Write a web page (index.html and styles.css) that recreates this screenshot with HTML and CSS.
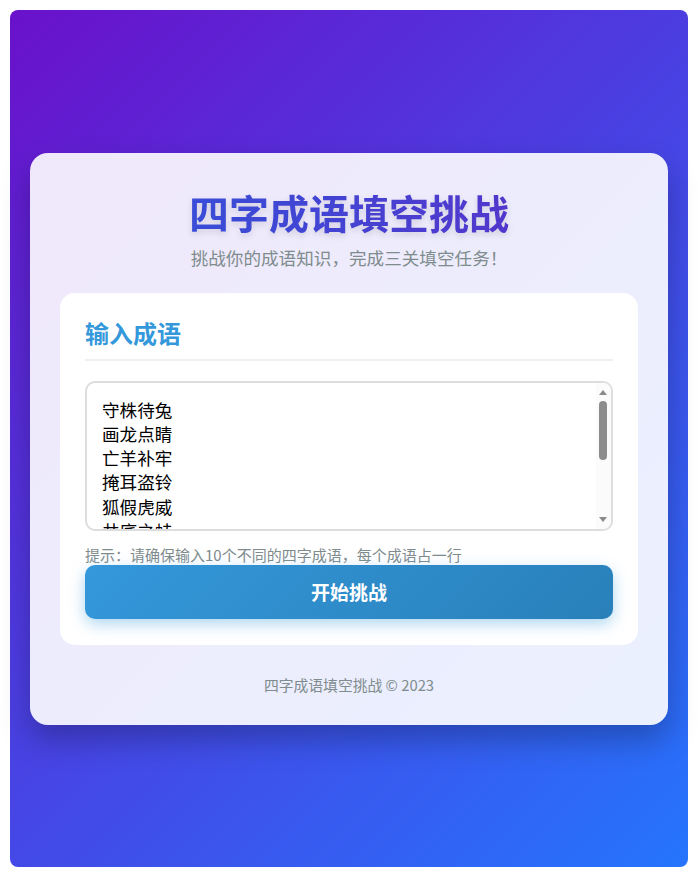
FILE: index.html
```html
<!DOCTYPE html>
<html lang="zh">
<head>
<meta charset="utf-8">
<title>四字成语填空挑战</title>
<link rel="stylesheet" href="styles.css">
</head>
<body>
<div class="page">
  <div class="card">
    <header class="header">
      <h1 class="title">四字成语填空挑战</h1>
      <p class="subtitle">挑战你的成语知识，完成三关填空任务！</p>
    </header>
    <section class="panel">
      <h2 class="panel-title">输入成语</h2>
      <div class="field">
        <textarea class="idioms" spellcheck="false">守株待兔
画龙点睛
亡羊补牢
掩耳盗铃
狐假虎威
井底之蛙
对牛弹琴
刻舟求剑
杯弓蛇影
叶公好龙
</textarea>
        <div class="scrollbar" aria-hidden="true">
          <span class="arrow up"></span>
          <span class="thumb"></span>
          <span class="arrow down"></span>
        </div>
      </div>
      <p class="hint">提示：请确保输入10个不同的四字成语，每个成语占一行</p>
      <button class="start">开始挑战</button>
    </section>
    <footer class="footer">四字成语填空挑战 © 2023</footer>
  </div>
</div>
</body>
</html>
```

FILE: styles.css
```css
* { box-sizing: border-box; }
html, body { margin: 0; padding: 0; background: #fff; }
body {
  padding: 10px;
  font-family: "Noto Sans CJK SC", "Noto Sans", sans-serif;
}
.page {
  height: 857px;
  border-radius: 8px;
  background: linear-gradient(135deg, #6a11cb 0%, #2575fc 100%);
  padding: 0 20px;
  display: flex;
  align-items: center;
}
.card {
  width: 100%;
  background: rgba(255, 255, 255, 0.9);
  border-radius: 18px;
  padding: 30px;
  box-shadow: 0 15px 30px rgba(0, 0, 0, 0.25);
}
.header { text-align: center; margin-bottom: 23px; }
.title {
  margin: 0;
  font-size: 40px;
  font-weight: 700;
  line-height: 58px;
  background: linear-gradient(90deg, #2f56dc, #5b2ec8);
  -webkit-background-clip: text;
  background-clip: text;
  -webkit-text-fill-color: transparent;
  filter: drop-shadow(0 3px 3px rgba(0, 0, 0, 0.12));
}
.subtitle {
  margin: 4px 0 0;
  font-size: 17.6px;
  line-height: 25px;
  color: #7f8c8d;
}
.panel {
  background: #fff;
  border-radius: 15px;
  padding: 25px 25px 26px;
  display: flex;
  flex-direction: column;
}
.panel-title {
  margin: 0 0 20px;
  font-size: 24px;
  line-height: 30px;
  font-weight: 700;
  color: #3498db;
  padding-bottom: 11px;
  border-bottom: 2px solid #ecf0f1;
}
.field { position: relative; }
.idioms {
  display: block;
  width: 100%;
  height: 150px;
  border: 2px solid #ddd;
  border-radius: 10px;
  padding: 15px 30px 15px 15px;
  font-family: "Noto Sans CJK SC", sans-serif;
  font-size: 17.6px;
  line-height: 24.3px;
  color: #000;
  resize: none;
  outline: none;
  overflow: hidden;
}
.scrollbar {
  position: absolute;
  top: 2px;
  bottom: 2px;
  right: 2px;
  width: 15px;
  background: #fbfbfb;
  border-radius: 0 8px 8px 0;
  pointer-events: none;
}
.arrow {
  position: absolute;
  left: 3px;
  width: 0;
  height: 0;
  border-left: 4.5px solid transparent;
  border-right: 4.5px solid transparent;
}
.arrow.up { top: 7px; border-bottom: 5px solid #8a8a8a; }
.arrow.down { bottom: 7px; border-top: 5px solid #8a8a8a; }
.thumb {
  position: absolute;
  top: 18px;
  left: 3px;
  width: 8px;
  height: 59px;
  border-radius: 4px;
  background: #8c8c8c;
}
.hint {
  margin: 13px 0 0;
  font-size: 15px;
  line-height: 21px;
  color: #7f8c8d;
}
.start {
  margin-top: 0;
  height: 54px;
  border: 0;
  border-radius: 10px;
  background: linear-gradient(135deg, #3498db, #2980b9);
  color: #fff;
  font-family: "Noto Sans CJK SC", sans-serif;
  font-size: 19px;
  font-weight: 700;
  box-shadow: 0 5px 15px rgba(52, 152, 219, 0.4);
}
.footer {
  margin-top: 30px;
  text-align: center;
  font-size: 14.8px;
  line-height: 20px;
  color: #7f8c8d;
}
```
